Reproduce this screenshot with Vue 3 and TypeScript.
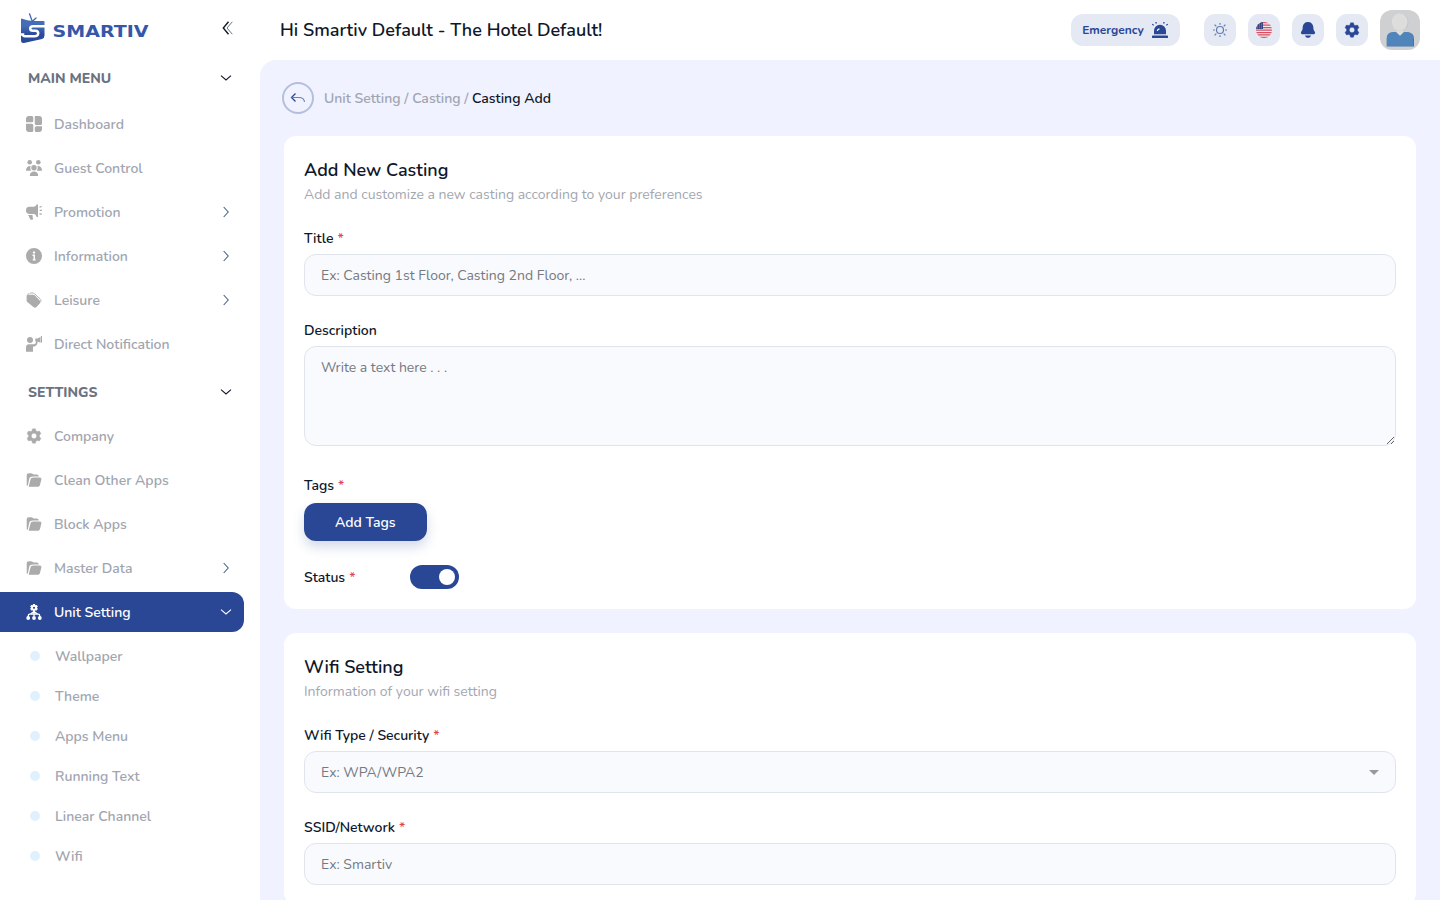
<script setup lang="ts">
interface NavItem { label: string; icon: string; chevron?: 'right' | 'down'; active?: boolean }

const mainItems: NavItem[] = [
  { label: 'Dashboard', icon: 'dashboard' },
  { label: 'Guest Control', icon: 'guests' },
  { label: 'Promotion', icon: 'promo', chevron: 'right' },
  { label: 'Information', icon: 'info', chevron: 'right' },
  { label: 'Leisure', icon: 'tag', chevron: 'right' },
  { label: 'Direct Notification', icon: 'direct' },
]
const settingItems: NavItem[] = [
  { label: 'Company', icon: 'gear' },
  { label: 'Clean Other Apps', icon: 'folder' },
  { label: 'Block Apps', icon: 'folder' },
  { label: 'Master Data', icon: 'folder', chevron: 'right' },
  { label: 'Unit Setting', icon: 'unit', chevron: 'down', active: true },
]
const sections = [
  { title: 'MAIN MENU', items: mainItems },
  { title: 'SETTINGS', items: settingItems },
]
const subItems: string[] = ['Wallpaper', 'Theme', 'Apps Menu', 'Running Text', 'Linear Channel', 'Wifi']
</script>

<template>
  <div class="app">
    <svg class="defs" aria-hidden="true">
      <symbol id="dashboard" viewBox="0 0 16 16"><path d="M3 0h2.800q1.500 0 1.500 1.500v3.200q0 1.500-1.500 1.500H0V3a3 3 0 0 1 3-3zM8.800 0H13a3 3 0 0 1 3 3v4.500Q16 9 14.500 9h-4.200q-1.500 0-1.500-1.500zM0 7.700h5.800q1.500 0 1.500 1.500v5.300Q7.300 16 5.800 16H3a3 3 0 0 1-3-3zM10.300 10.300H16V13a3 3 0 0 1-3 3h-2.700q-1.500 0-1.500-1.500v-2.700q0-1.500 1.500-1.500z" /></symbol>
      <symbol id="guests" viewBox="0 0 16 16"><circle cx="3.700" cy="2.300" r="2.300" /><circle cx="12.300" cy="2.300" r="2.300" /><circle cx="8" cy="7.800" r="2.700" /><path d="M0 10.700C0 7.500 1.500 5.800 4.600 5.900 4 8 4.400 9.600 5.300 10.700zM16 10.700C16 7.500 14.500 5.800 11.400 5.900 12 8 11.600 9.600 10.700 10.700zM3.800 16c0-3 1.500-4.600 4.200-4.600s4.200 1.600 4.200 4.600z" /></symbol>
      <symbol id="promo" viewBox="0 0 16 16"><path d="M3.300 2.700h4.500C9 2.700 10.200 2 10.600.6c.1-.5 1.400-.5 1.400.2v11.800c0 .7-1.300.7-1.400.2C10.200 11.200 9 9.900 7.800 9.900H3.300C1 9.900 0 8.500 0 6.300s1-3.600 3.300-3.600zM2 11h3.800c1.600 0 .4 2.300 1.200 3.300.5.700 0 1.400-.8 1.400H5c-1.300 0-1.400-3-3-4.700z" /><path d="M13.500 3.200 15.700 2.400M13.700 6.300H16M13.500 9.600l2.200.8" fill="none" stroke="currentColor" stroke-width="1.200" /></symbol>
      <symbol id="info" viewBox="0 0 16 16"><path fill-rule="evenodd" d="M8 0a8 8 0 1 1 0 16A8 8 0 0 1 8 0zm0 3.300a1.200 1.200 0 1 0 .01 0zM6.500 6.500v1.400h1v3.300h-.8v1.300h2.900v-1.300h-.6V6.500z" /></symbol>
      <symbol id="tag" viewBox="0 0 16 16"><path d="M2.800 2.800H7c.9 0 1.600.3 2.200.9l4.500 4.700c1 1.100 1 2 0 3.100L10.500 15c-1 1-2 1-3.100 0L1.600 10.300C.9 9.700.6 9 .6 8.200V5c0-1.400.8-2.200 2.200-2.200z" /><path d="M3.500 1.500C5 .8 7.200.7 8.300 1.600l5.700 5.200c1 .9 1.200 2 .8 3M1 3.500q.5-1.500 2-1.800" fill="none" stroke="currentColor" stroke-width=".9" /></symbol>
      <symbol id="direct" viewBox="0 0 16 16"><circle cx="4" cy="4" r="3" /><path d="M0 15.700V11.500C0 9.300 1 8.200 3 8.200h4.800c1.600 0 2-1 2.200-2.700h1.700c-.2 3.300-1.600 5-4.700 5.200v5zM9.300 2.500h2L14.500 1v5.800L11.300 5.500h-2z" /><path d="M14.900 0H16v6.500l-1.100.3z" /></symbol>
      <symbol id="gear" viewBox="0 0 16 16"><path fill-rule="evenodd" d="M6.600.8h2.800l.7 2.100 1.200.7 2.200-.5 1.400 2.500-1.400 1.700v1.400l1.400 1.700-1.400 2.500-2.200-.5-1.200.7-.7 2.100H6.600l-.7-2.100-1.200-.7-2.200.5-1.400-2.500 1.400-1.700V7.300L1.100 5.600l1.400-2.500 2.200.5 1.200-.7zM8 5.300a2.700 2.700 0 1 0 .01 0z" stroke="currentColor" stroke-width=".4" stroke-linejoin="round" /></symbol>
      <symbol id="folder" viewBox="0 0 16 16"><path d="M.7 13V3.500C.7 2 1.500 1.200 3 1.200h2c1.500 0 1.700 1.200 3 1.200h2.500c1.400 0 2.300.7 2.300 2H7C4.800 4.400 3.700 5 3.200 7L1.800 13.800C1.200 13.800.7 13.500.7 13z" /><path d="m2.700 14.800 1.600-6.600C4.700 6.300 5.500 5.600 7.300 5.600H13.700c1.400 0 1.900.9 1.600 2.200l-1.200 4.700c-.4 1.700-1.100 2.300-2.800 2.300z" /></symbol>
      <symbol id="unit" viewBox="0 0 16 16"><path fill-rule="evenodd" d="M7.100 0h1.800l.5 1.200 1.400-.2 1 1.600-.9 1.100.9 1.100-1 1.600-1.400-.2L8.900 7.400H7.100l-.5-1.200-1.400.2-1-1.600.9-1.100-.9-1.100 1-1.600 1.400.2zM8 2.700a1 1 0 1 0 .01 0z" /><path d="M8 7v5M2.300 13v-1.300q0-1.500 1.500-1.500h8.400q1.500 0 1.500 1.500V13M4.500 10 8 7.500l3.500 2.500" fill="none" stroke="currentColor" stroke-width="1.300" /><circle cx="2.200" cy="14" r="1.900" /><circle cx="8" cy="14" r="1.900" /><circle cx="13.800" cy="14" r="1.900" /></symbol>
      <symbol id="right" viewBox="0 0 12 12"><path d="M3.700 1 8.200 6 3.700 11" fill="none" stroke="currentColor" stroke-width="1.100" /></symbol>
      <symbol id="down" viewBox="0 0 12 12"><path d="M1 3.700 6 8 11 3.700" fill="none" stroke="currentColor" stroke-width="1.100" /></symbol>
    </svg>

    <aside class="sidebar">
      <div class="brand">
        <svg class="logo" viewBox="0 0 132 34">
          <defs>
            <linearGradient id="tv" x1="0" y1="0" x2="0" y2="1"><stop offset=".3" stop-color="#456db6" /><stop offset=".65" stop-color="#2b4a9d" /></linearGradient>
          </defs>
          <path d="M1.500 6.500Q7 8.800 13 9L23.500 9Q24.500 9 24.500 10V23.500Q24.500 26 22 27L4 31Q1 31.500 1 28.500V7z" fill="url(#tv)" />
          <path d="M26 14.300H13C9.300 14.300 9.300 18.800 13 18.800H15.500C19.500 18.800 19 24.300 14.500 24.300H5Q3 24.300 3 22.500H0" fill="none" stroke="#fff" stroke-width="2.500" />
          <path d="M12.300 9.500 9.500 1.800M12.300 9.500 16 6" fill="none" stroke="#4168b2" stroke-width="1.300" stroke-linecap="round" />
          <text x="32.500" y="25" class="wordmark" textLength="96" lengthAdjust="spacingAndGlyphs">SMARTIV</text>
        </svg>
        <svg class="collapse" viewBox="0 0 12 14"><path d="M6.500.8 1.300 7l5.200 6.200" fill="none" stroke="#111827" stroke-width="1.400" /><path d="M10.300.8 5 7l5.300 6.200" fill="none" stroke="#6b7280" stroke-width="1" /></svg>
      </div>
      <nav>
        <section v-for="s in sections" :key="s.title" class="group">
          <header class="group-title"><span>{{ s.title }}</span><svg class="chev"><use href="#down" /></svg></header>
          <a v-for="i in s.items" :key="i.label" class="item" :class="{ active: i.active }">
            <svg class="icon"><use :href="'#' + i.icon" /></svg>
            <span class="item-label">{{ i.label }}</span>
            <svg v-if="i.chevron" class="chev"><use :href="'#' + i.chevron" /></svg>
          </a>
        </section>
        <a v-for="label in subItems" :key="label" class="sub"><i class="dot"></i><span>{{ label }}</span></a>
      </nav>
    </aside>

    <div class="page">
      <header class="topbar">
        <h1>Hi Smartiv Default - The Hotel Default!</h1>
        <div class="actions">
          <button class="emergency">
            <span>Emergency</span>
            <svg class="glyph" viewBox="0 0 16 16"><path d="M2 12.300V8.800a6 6 0 0 1 12 0v3.500zM.8 13.500h14.400q.8 0 .8.800V16H0v-1.700q0-.8.8-.8z" /><path d="M5.300 9c.2-1.300 1-2 2.200-2.200" fill="none" stroke="#fff" stroke-width="1.200" /><path d="m3.800 0 .6 1.500M12.200 0l-.6 1.500M.2 2.200l1.500 1M15.800 2.200l-1.500 1" fill="none" stroke="currentColor" stroke-width="1.300" /></svg>
          </button>
          <button class="square"><svg class="glyph thin" viewBox="0 0 16 16"><circle cx="8" cy="8" r="3.500" /><path d="M8 1v1.800M8 13.200V15M1 8h1.800M13.200 8H15M2.600 2.600l1.700 1.700M11.700 11.700l1.700 1.700M13.400 2.600l-1.700 1.700M4.300 11.700l-1.700 1.700" /></svg></button>
          <button class="square"><svg class="glyph" viewBox="0 0 16 16"><clipPath id="round"><circle cx="8" cy="8" r="8" /></clipPath><g clip-path="url(#round)"><path fill="#f4e9ee" d="M0 0h16v16H0z" /><path fill="none" stroke="#d64f61" stroke-width="1.250" d="M0 .7h16M0 3.150h16M0 5.600h16M0 8.050h16M0 10.500h16M0 12.950h16M0 15.400h16" /><path fill="#34457f" d="M0 0h7v7H0z" /><path fill="none" stroke="#c0c7df" stroke-width=".7" stroke-dasharray=".7 1.300" d="M1 2.200h6M1 4h6M1 5.800h6" /></g></svg></button>
          <button class="square"><svg class="glyph" viewBox="0 0 16 16"><path d="M8 0c3.200 0 5 2 5.300 5l.2 2.500 1.400 2.600c.5 1.300 0 2.100-1.300 2.100H2.400c-1.300 0-1.800-.8-1.300-2.100l1.400-2.600L2.700 5C3 2 4.800 0 8 0zM5 13.400h6c-.5 1.600-1.500 2.400-3 2.400s-2.500-.8-3-2.400z" /></svg></button>
          <button class="square"><svg class="glyph"><use href="#gear" /></svg></button>
          <svg class="avatar" viewBox="0 0 40 40"><path fill="#cfd0d2" d="M0 0h40v40H0z" /><path d="M6.800 36.500v-7.500q0-6.500 6.200-6.500h15q6 0 6 6.500v7.500z" fill="#4474a8" /><path d="M6.800 36v-7.500q0-6.500 6.200-6.500h14q6 0 6 6.500V36z" fill="#5085bb" /><ellipse cx="20.400" cy="12.300" rx="8" ry="8.800" fill="#c3c4c5" /><ellipse cx="19.700" cy="12" rx="7.900" ry="8.700" fill="#dddddc" /><path d="M16.500 20.500h7v2L20 25.800 16.500 22.500z" fill="#dddddc" /></svg>
        </div>
      </header>

      <main class="content">
        <div class="crumbs">
          <button class="back"><svg class="reply" viewBox="0 0 16 14"><path d="M5.500 2.500 1.500 6.500l4 4" fill="none" stroke="#2a4796" stroke-width="1.300" /><path d="M1.500 6.500H9q5 0 5.500 4.500" fill="none" stroke="#6b80b8" stroke-width="1.100" /></svg></button>
          <span>Unit Setting / Casting /</span><span class="current">Casting Add</span>
        </div>

        <section class="card">
          <h2>Add New Casting</h2>
          <p>Add and customize a new casting according to your preferences</p>
          <div class="field"><label><span>Title</span><b>*</b></label><input class="box" placeholder="Ex: Casting 1st Floor, Casting 2nd Floor, ..." /></div>
          <div class="field"><label><span>Description</span></label><textarea class="box area" placeholder="Write a text here . . ."></textarea></div>
          <div class="field tags"><label><span>Tags</span><b>*</b></label><button class="add"><span>Add Tags</span></button></div>
          <div class="status"><label><span>Status</span><b>*</b></label><div class="toggle"><i></i></div></div>
        </section>

        <section class="card">
          <h2>Wifi Setting</h2>
          <p>Information of your wifi setting</p>
          <div class="field"><label><span>Wifi Type / Security</span><b>*</b></label><div class="box select"><span>Ex: WPA/WPA2</span><i class="caret"></i></div></div>
          <div class="field"><label><span>SSID/Network</span><b>*</b></label><input class="box" placeholder="Ex: Smartiv" /></div>
        </section>
      </main>
    </div>
  </div>
</template>

<style>
html, body { margin: 0; overflow: hidden; }
</style>

<style scoped>
* { box-sizing: border-box; }
.app { display: flex; width: 1440px; height: 900px; overflow: hidden; background: #fff; color: #0f172a; font: 600 14px/22px Nunito, Lato, "Open Sans", sans-serif; white-space: nowrap; }
.defs { position: absolute; width: 0; height: 0; }
svg { display: block; flex: none; fill: currentColor; }
button { display: flex; align-items: center; justify-content: center; padding: 0; border: 0; font: inherit; color: inherit; }
h1, h2, p { margin: 0; font-weight: 600; }
.sidebar { width: 260px; flex: none; }
.brand { height: 60px; display: flex; justify-content: space-between; padding: 12px 26px 0 20px; }
.logo { width: 132px; height: 34px; }
.wordmark { font: 700 16.500px "DejaVu Sans", sans-serif; fill: #3557a9; }
.collapse { width: 12px; height: 14px; margin-top: 9px; }
.group-title { height: 36px; display: flex; align-items: center; justify-content: space-between; padding: 0 28px; margin-bottom: 8px; color: #6b7280; font-weight: 800; line-height: 21px; }
.group + .group { margin-top: 10px; }
.group + .group .group-title { margin-bottom: 6px; }
.group-title .chev { color: #111827; }
.chev { width: 12px; height: 12px; }
.item, .sub { line-height: 21px; }
.item { display: flex; align-items: center; width: 244px; height: 40px; margin-bottom: 4px; padding: 0 12px 0 26px; color: #a1a5b0; border-radius: 0 12px 12px 0; }
.item span, .sub span, .group-title span, .crumbs span { padding-top: 1px; }
.icon { width: 16px; height: 16px; margin-right: 12px; color: #ababab; }
.item-label { flex: 1; }
.item .chev { color: #4c6589; }
.item.active { background: #2a4796; color: #fff; }
.active .icon, .item.active .chev { color: #fff; }
.sub { display: flex; align-items: center; height: 40px; padding-left: 29.500px; color: #a1a5b0; }
.dot { width: 10px; height: 10px; border-radius: 50%; margin-right: 15.500px; background: #e0f0ff; }
.page { flex: 1; min-width: 0; }
.topbar { height: 60px; display: flex; align-items: center; justify-content: space-between; padding: 0 20px; }
h1, h2 { font-size: 18px; line-height: 28px; }
.actions { display: flex; align-items: center; gap: 12px; color: #2a4796; }
.emergency { height: 32px; width: 109px; gap: 8px; margin-right: 12px; padding-right: 1px; border-radius: 12px; background: #e5e9f4; font-size: 12px; font-weight: 700; line-height: 20px; }
.square { width: 32px; height: 32px; border-radius: 11px; background: #e5e9f4; }
.glyph { width: 16px; height: 16px; }
.thin { fill: none; stroke: #607ab2; stroke-width: 1.2; }
.avatar { width: 40px; height: 40px; border-radius: 12px; }
.content { height: 840px; padding: 22px 24px 0; background: #f0f2ff; border-radius: 16px 0 0 0; overflow: hidden; }
.crumbs { display: flex; align-items: center; height: 32px; margin: 0 0 22px -2px; color: #a1a5b0; line-height: 21px; }
.back { width: 32px; height: 32px; margin-right: 10px; border: 2px solid #b4bfde; border-radius: 50%; background: transparent; }
.reply { width: 16px; height: 14px; }
.crumbs .current { margin-left: 3.500px; color: #0f172a; }
.card { padding: 20px; margin-bottom: 24px; border-radius: 12px; background: #fff; }
p { height: 20px; line-height: 21px; color: #a3a7b0; font-weight: 400; }
.field { display: flex; flex-direction: column; margin-top: 24px; }
label { display: flex; gap: 4px; height: 20px; line-height: 21px; }
b { color: #df4655; font-weight: 600; }
.box { width: 100%; height: 42px; margin-top: 6px; padding: 0 16px; border: 1px solid #e0e4ec; border-radius: 12px; background: #f8fafe; font: 400 14px/20px Nunito, Lato, "Open Sans", sans-serif; color: #757980; outline: none; }
.box::placeholder { color: #757980; }
.area { height: 100px; padding-top: 11px; resize: vertical; }
.tags { margin-top: 29px; align-items: flex-start; }
.add { width: 122.500px; height: 38px; margin-top: 8px; padding-top: 1px; line-height: 20px; border-radius: 12px; background: #2a4796; color: #fff; box-shadow: 0 6px 12px rgba(42, 71, 150, .2); }
.status { display: flex; align-items: center; height: 24px; margin-top: 24px; }
.status label { width: 106px; }
.toggle { width: 49px; height: 24px; padding: 4px; border-radius: 12px; background: #2a4796; display: flex; justify-content: flex-end; }
.toggle i { width: 16px; height: 16px; border-radius: 50%; background: #fff; }
.select { display: flex; align-items: center; justify-content: space-between; }
.select span { padding-top: 2px; }
.caret { border: 5px solid transparent; border-top-color: #999; border-bottom: 0; }
</style>
